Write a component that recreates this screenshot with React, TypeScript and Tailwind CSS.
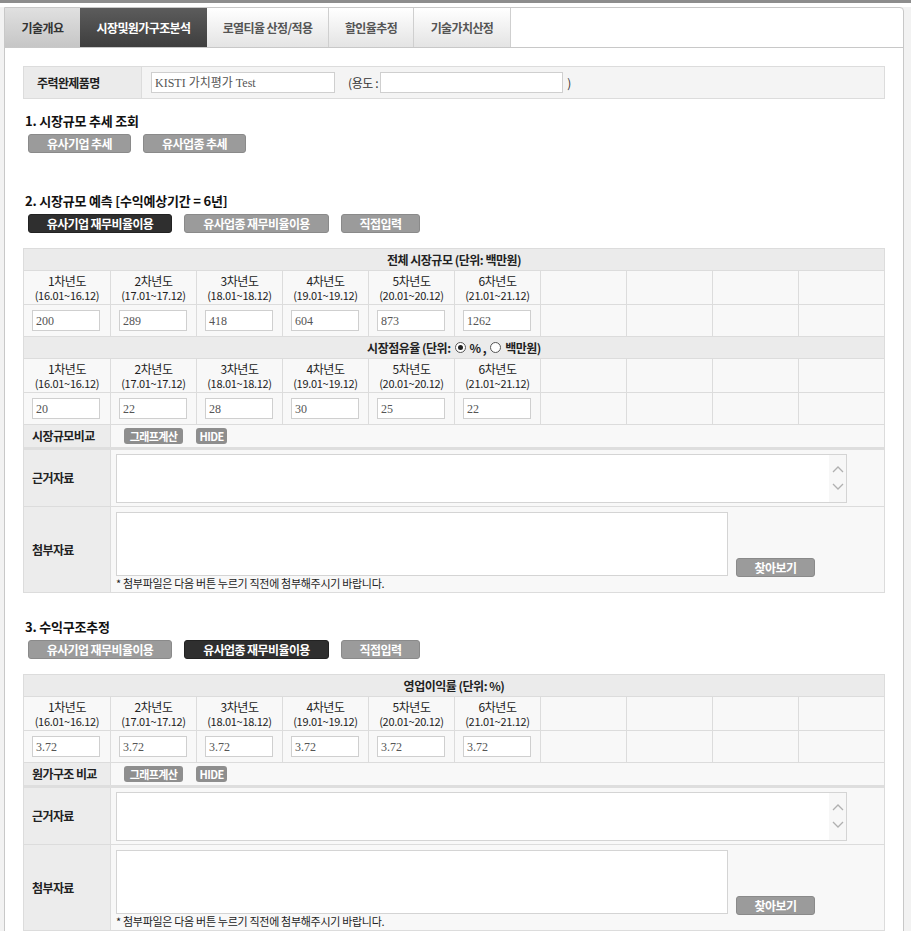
import React from "react";

const SANS = "font-['Noto_Sans_CJK_KR','Noto_Sans',sans-serif]";

const years = [
  ["1차년도", "(16.01~16.12)"],
  ["2차년도", "(17.01~17.12)"],
  ["3차년도", "(18.01~18.12)"],
  ["4차년도", "(19.01~19.12)"],
  ["5차년도", "(20.01~20.12)"],
  ["6차년도", "(21.01~21.12)"],
];

function Btn({ label, dark, className }: { label: string; dark?: boolean; className?: string }) {
  return (
    <div
      className={`flex h-[19px] items-center justify-center rounded-[3px] border text-[12px] font-bold tracking-[-0.6px] text-white ${
        dark ? "border-[#222] bg-[#2f2f2f]" : "border-[#8a8a8a] bg-[#9b9b9b]"
      } ${className ?? ""}`}
    >
      {label}
    </div>
  );
}

function SmallBtn({ label, className }: { label: string; className?: string }) {
  return (
    <div
      className={`flex h-[16px] items-center justify-center rounded-[3px] bg-[#8e8e8e] text-[11px] font-bold tracking-[-0.6px] text-white ${className ?? ""}`}
    >
      {label}
    </div>
  );
}

function Field({ value, className }: { value?: string; className?: string }) {
  return (
    <div
      className={`flex h-[21px] items-center border border-[#cfcfcf] bg-white pl-[3px] font-['Liberation_Serif','Noto_Sans_CJK_KR',serif] text-[12px] text-[#555] ${className ?? ""}`}
    >
      {value}
    </div>
  );
}

function Header({ children }: { children: React.ReactNode }) {
  return (
    <div className="flex h-[22px] items-center justify-center border-b border-[#dcdcdc] bg-[#ebebeb] text-[12px] font-bold tracking-[-0.5px] text-[#222]">
      {children}
    </div>
  );
}

function YearRow() {
  return (
    <div className="grid h-[34px] grid-cols-10 border-b border-[#dcdcdc]">
      {Array.from({ length: 10 }).map((_, i) => (
        <div
          key={i}
          className={`flex flex-col items-center justify-center text-[#222] ${i > 0 ? "border-l border-[#dcdcdc]" : ""}`}
        >
          {years[i] ? (
            <>
              <span className="text-[12px] leading-[15px] tracking-[-0.4px]">{years[i][0]}</span>
              <span className="text-[11px] leading-[14px] tracking-[-0.3px]">{years[i][1]}</span>
            </>
          ) : null}
        </div>
      ))}
    </div>
  );
}

function InputRow({ values }: { values: string[] }) {
  return (
    <div className="grid h-[32px] grid-cols-10 border-b border-[#dcdcdc]">
      {Array.from({ length: 10 }).map((_, i) => (
        <div key={i} className={`flex items-center pl-[8px] ${i > 0 ? "border-l border-[#dcdcdc]" : ""}`}>
          {values[i] !== undefined ? <Field value={values[i]} className="w-[68px]" /> : null}
        </div>
      ))}
    </div>
  );
}

function CompareRow({ label }: { label: string }) {
  return (
    <div className="flex h-[25px] border-b-[3px] border-[#dedede]">
      <div className="flex w-[86px] items-center bg-[#ececec] pl-[8px] text-[12px] font-bold tracking-[-0.6px] text-[#222]">
        {label}
      </div>
      <div className="flex flex-1 items-center gap-[13px] border-l border-[#dcdcdc] pl-[13px]">
        <SmallBtn label="그래프계산" className="w-[59px]" />
        <SmallBtn label="HIDE" className="w-[31px]" />
      </div>
    </div>
  );
}

function Chevron({ up }: { up?: boolean }) {
  return (
    <svg width="12" height="8" viewBox="0 0 12 8">
      <path d={up ? "M1 7 L6 2 L11 7" : "M1 1 L6 6 L11 1"} fill="none" stroke="#b0b0b0" strokeWidth="1.3" />
    </svg>
  );
}

function DocRows() {
  return (
    <>
      <div className="flex h-[57px] border-b border-[#dcdcdc]">
        <div className="flex w-[86px] items-center bg-[#ececec] pl-[8px] text-[12px] font-bold tracking-[-0.6px] text-[#222]">
          근거자료
        </div>
        <div className="flex flex-1 items-center border-l border-[#dcdcdc] pl-[5px]">
          <div className="flex h-[49px] w-[731px] justify-end border border-[#d4d4d4] bg-white">
            <div className="flex w-[17px] flex-col items-center justify-center gap-[10px] bg-[#f7f7f7]">
              <Chevron up />
              <Chevron />
            </div>
          </div>
        </div>
      </div>
      <div className="flex h-[85px]">
        <div className="flex w-[86px] items-center bg-[#ececec] pl-[8px] text-[12px] font-bold tracking-[-0.6px] text-[#222]">
          첨부자료
        </div>
        <div className="flex flex-1 flex-col border-l border-[#dcdcdc] pl-[5px] pt-[5px]">
          <div className="flex items-end gap-[8px]">
            <div className="h-[64px] w-[612px] border border-[#d4d4d4] bg-white" />
            <Btn label="찾아보기" className="mb-[-1px] w-[79px]" />
          </div>
          <div className="mt-[1px] text-[11px] leading-[13px] tracking-[-0.3px] text-[#222]">
            * 첨부파일은 다음 버튼 누르기 직전에 첨부해주시기 바랍니다.
          </div>
        </div>
      </div>
    </>
  );
}

function Radio({ on }: { on?: boolean }) {
  return (
    <span className="mx-[4px] inline-flex h-[11px] w-[11px] items-center justify-center rounded-full border border-[#555] bg-white align-middle">
      {on ? <span className="h-[5px] w-[5px] rounded-full bg-[#222]" /> : null}
    </span>
  );
}

function Title({ children, className }: { children: React.ReactNode; className?: string }) {
  return (
    <div className={`pl-[2px] text-[13px] font-bold leading-[16px] tracking-[-0.2px] text-[#111] ${className ?? ""}`}>
      {children}
    </div>
  );
}

export default function App() {
  const tabs = [
    { label: "기술개요", w: "w-[75px]", cls: "bg-gradient-to-b from-[#e0e0e0] to-[#c6c6c6] text-[#333]" },
    { label: "시장및원가구조분석", w: "w-[127px]", cls: "bg-gradient-to-b from-[#5c5c5c] to-[#3e3e3e] text-white" },
    { label: "로열티율 산정/적용", w: "w-[122px]", cls: "bg-gradient-to-b from-white to-[#e4e4e4] text-[#555] border-r border-[#cfcfcf]" },
    { label: "할인율추정", w: "w-[85px]", cls: "bg-gradient-to-b from-white to-[#e4e4e4] text-[#555] border-r border-[#cfcfcf]" },
    { label: "기술가치산정", w: "w-[97px]", cls: "bg-gradient-to-b from-white to-[#e4e4e4] text-[#555] border-r border-[#cfcfcf]" },
  ];

  return (
    <div className={`min-h-[931px] w-[911px] overflow-hidden border-t-[3px] border-[#8d8d8d] bg-[#f2f2f2] ${SANS}`}>
      <div className="h-[4px] w-[911px] bg-white" />
      <div className="ml-[4px] w-[900px] rounded-tr-[4px] border border-[#c8c8c8] bg-white pb-[40px]">
        <div className="flex h-[40px] border-b border-[#c8c8c8]">
          {tabs.map((t) => (
            <div
              key={t.label}
              className={`flex items-center justify-center text-[12px] font-bold tracking-[-0.6px] ${t.w} ${t.cls}`}
            >
              {t.label}
            </div>
          ))}
        </div>

        <div className="px-[18px] pt-[18px]">
          {/* product */}
          <div className="flex h-[33px] border border-[#dcdcdc] bg-[#f4f4f4]">
            <div className="flex w-[117px] items-center bg-[#ebebeb] pl-[13px] text-[12px] font-bold tracking-[-0.6px] text-[#222]">
              주력완제품명
            </div>
            <div className="flex flex-1 items-center border-l border-[#dcdcdc] pl-[9px] text-[12px] text-[#333]">
              <Field value="KISTI 가치평가 Test" className="w-[184px]" />
              <span className="ml-[13px] mr-[2px] tracking-[-0.4px]">(용도 :</span>
              <Field className="w-[183px]" />
              <span className="ml-[4px]">)</span>
            </div>
          </div>

          {/* 1 */}
          <Title className="mt-[14px]">1. 시장규모 추세 조회</Title>
          <div className="mt-[5px] flex gap-[12px] pl-[5px]">
            <Btn label="유사기업 추세" className="w-[103px]" />
            <Btn label="유사업종 추세" className="w-[103px]" />
          </div>

          {/* 2 */}
          <Title className="mt-[40px]">2. 시장규모 예측 [수익예상기간 = 6년]</Title>
          <div className="mt-[5px] flex gap-[12px] pl-[5px]">
            <Btn dark label="유사기업 재무비율이용" className="w-[144px]" />
            <Btn label="유사업종 재무비율이용" className="w-[145px]" />
            <Btn label="직접입력" className="w-[79px]" />
          </div>

          <div className="mt-[15px] border border-[#dcdcdc] bg-[#f8f8f8]">
            <Header>전체 시장규모 (단위: 백만원)</Header>
            <YearRow />
            <InputRow values={["200", "289", "418", "604", "873", "1262"]} />
            <Header>
              시장점유율 (단위:
              <Radio on />
              % ,
              <Radio />
              백만원)
            </Header>
            <YearRow />
            <InputRow values={["20", "22", "28", "30", "25", "22"]} />
            <CompareRow label="시장규모비교" />
            <DocRows />
          </div>

          {/* 3 */}
          <Title className="mt-[26px]">3. 수익구조추정</Title>
          <div className="mt-[5px] flex gap-[12px] pl-[5px]">
            <Btn label="유사기업 재무비율이용" className="w-[144px]" />
            <Btn dark label="유사업종 재무비율이용" className="w-[145px]" />
            <Btn label="직접입력" className="w-[79px]" />
          </div>

          <div className="mt-[15px] border border-[#dcdcdc] bg-[#f8f8f8]">
            <Header>영업이익률 (단위: %)</Header>
            <YearRow />
            <InputRow values={["3.72", "3.72", "3.72", "3.72", "3.72", "3.72"]} />
            <CompareRow label="원가구조 비교" />
            <DocRows />
          </div>
        </div>
      </div>
    </div>
  );
}
